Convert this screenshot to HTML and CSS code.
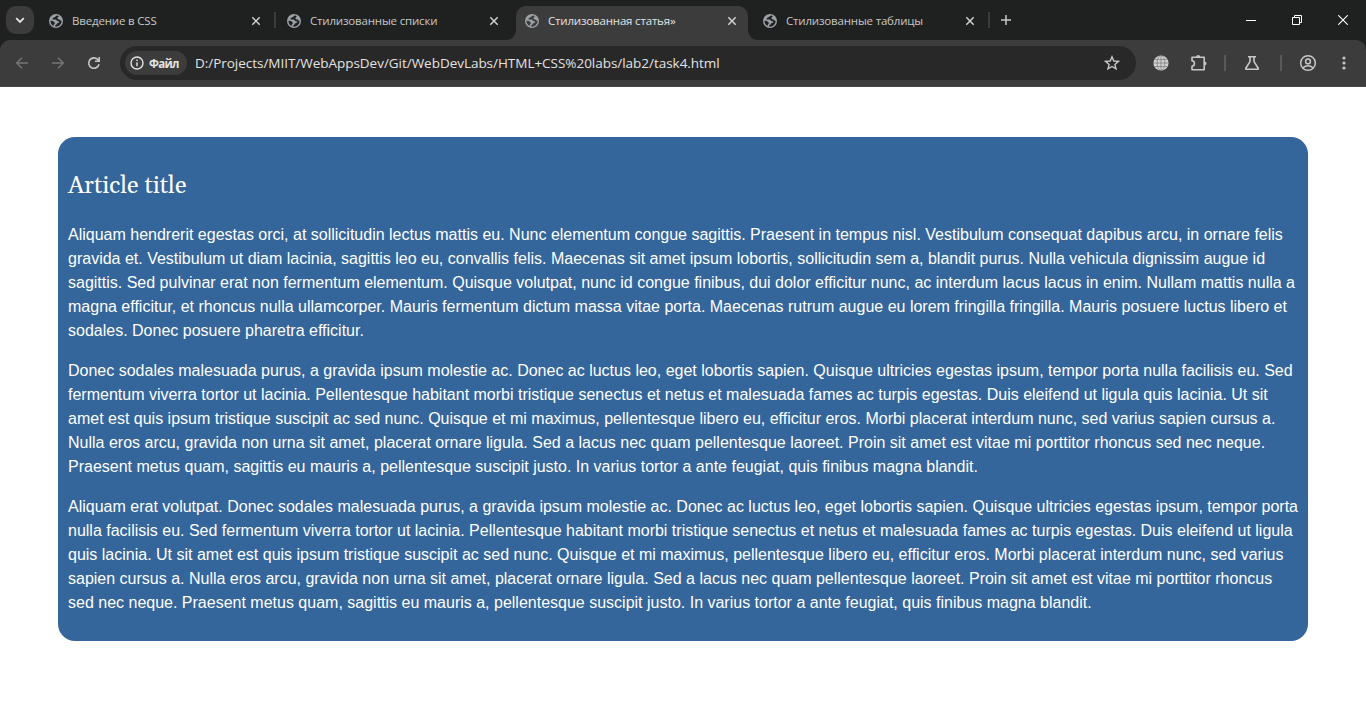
FILE: index.html
```html
<!DOCTYPE html>
<html lang="ru">
<head>
<meta charset="utf-8">
<title>Стилизованная статья»</title>
<link rel="stylesheet" href="styles.css">
</head>
<body>
<svg class="defs" width="0" height="0">
  <symbol id="globe" viewBox="0 0 14 14">
    <circle cx="7" cy="7" r="7" fill="#9aa0a6"/>
    <path d="M8.4 1.6C7 1.8 6.8 3 5.4 3.3C4.7 3.5 4.3 4.3 3.5 4.6V5.6H6.5C7.8 5.8 7.6 7 8.7 7.2H10.1V8.4C9.4 9 8.5 8.8 8 9.7C7.7 10.6 6.7 10.6 6.2 11.4V12.6C9.5 13 12.5 10.5 12.6 7C12 6.2 11 6.4 10.4 5.4C9.4 5.6 8.3 5.2 8.4 4.3C8.4 3.3 9.6 3.1 9.6 2Z M1.4 6.8C1.5 9.5 3 11.4 4.7 12.1V10.5C5.6 10.2 6.2 9.3 5.6 8.5C4.8 8.2 4.7 7.3 3.7 7.1Z" fill="var(--hole)"/>
  </symbol>
  <symbol id="cross" viewBox="0 0 10 10"><path d="M1.3 1.3 8.7 8.7M8.7 1.3 1.3 8.7" stroke="currentColor" stroke-width="1.5"/></symbol>
</svg>
<header class="browser">
  <div class="tabstrip">
    <button class="search"><svg width="10" height="7" viewBox="0 0 10 7"><path d="M1.2 1.2 5 5 8.8 1.2" fill="none" stroke="currentColor" stroke-width="1.8"/></svg></button>
    <div class="tab"><svg class="fav"><use href="#globe"/></svg><span>Введение в CSS</span><svg class="close"><use href="#cross"/></svg></div>
    <div class="tab lined"><svg class="fav"><use href="#globe"/></svg><span>Стилизованные списки</span><svg class="close"><use href="#cross"/></svg></div>
    <div class="tab active"><svg class="fav"><use href="#globe"/></svg><span>Стилизованная статья»</span><svg class="close"><use href="#cross"/></svg></div>
    <div class="tab"><svg class="fav"><use href="#globe"/></svg><span>Стилизованные таблицы</span><svg class="close"><use href="#cross"/></svg></div>
    <div class="newtab"><svg width="10" height="10" viewBox="0 0 10 10"><path d="M5 0V10M0 5H10" stroke="currentColor" stroke-width="1.5"/></svg></div>
    <div class="window">
      <svg width="10" height="10"><path d="M0 5.5H10" stroke="#fff"/></svg>
      <svg width="10" height="10"><path d="M.5 2.5H7.5V9.5H.5ZM2.5 2.5V.5H9.5V7.5H7.5" fill="none" stroke="#fff"/></svg>
      <svg width="10" height="10"><path d="M.2 .2 9.8 9.8M9.8 .2 .2 9.8" stroke="#fff" stroke-width="1.1"/></svg>
    </div>
  </div>
  <div class="toolbar">
    <div class="nav">
      <svg class="dim" width="16" height="16" viewBox="0 0 16 16"><path d="M14 8H3M8 2.7 2.7 8 8 13.3" fill="none" stroke="currentColor" stroke-width="1.5"/></svg>
      <svg class="dim" width="16" height="16" viewBox="0 0 16 16"><path d="M2 8H13M8 2.7 13.3 8 8 13.3" fill="none" stroke="currentColor" stroke-width="1.5"/></svg>
      <svg width="16" height="16" viewBox="0 0 16 16"><path d="M13 9.2A5.2 5.2 0 1 1 12.2 5.1M13.2 2V6.2H9" fill="none" stroke="currentColor" stroke-width="1.6"/></svg>
    </div>
    <div class="omnibox">
      <div class="chip"><svg width="14" height="14" viewBox="0 0 14 14"><circle cx="7" cy="7" r="6" fill="none" stroke="currentColor" stroke-width="1.4"/><path d="M7 6.2V10.3M7 3.6V5" stroke="currentColor" stroke-width="1.4"/></svg><b>Файл</b></div>
      <span class="url">D:/Projects/MIIT/WebAppsDev/Git/WebDevLabs/HTML+CSS%20labs/lab2/task4.html</span>
      <svg class="star" width="16" height="16" viewBox="0 0 16 16"><path d="M8 1.8 9.8 6 14.4 6.4 10.9 9.4 12 13.9 8 11.5 4 13.9 5.1 9.4 1.6 6.4 6.2 6Z" fill="none" stroke="currentColor" stroke-width="1.4"/></svg>
    </div>
    <div class="actions">
      <svg class="a1" width="16" height="16" viewBox="0 0 16 16"><circle cx="8" cy="8" r="7.6" fill="#d0d0d0"/><path d="M8 0V16M0 8H16M1.5 4.5H14.5M1.5 11.5H14.5" stroke="#777" stroke-width=".7"/><ellipse cx="8" cy="8" rx="3.9" ry="7.6" fill="none" stroke="#777" stroke-width=".7"/></svg>
      <svg class="a2" width="18" height="18" viewBox="0 0 18 18"><path d="M2 3.2H14.2V15.8H2V12.2C5.2 11.8 5.2 7.2 2 6.8Z" fill="none" stroke="currentColor" stroke-width="1.6" stroke-linejoin="round"/><path d="M6.2 3A2 2 0 0 1 10.2 3ZM14.5 7.5A2 2 0 0 1 14.5 11.5Z" fill="currentColor"/></svg>
      <i class="sep s1"></i>
      <svg class="a3" width="16" height="16" viewBox="0 0 16 16"><path d="M4 1.8H12M6 2V6.6L1.8 13.2Q1.5 14.2 2.5 14.2H13.5Q14.5 14.2 14.2 13.2L10 6.6V2" fill="none" stroke="currentColor" stroke-width="1.6"/></svg>
      <i class="sep s2"></i>
      <svg class="a4" width="18" height="18" viewBox="0 0 18 18"><g fill="none" stroke="currentColor" stroke-width="1.5"><circle cx="9" cy="9" r="7.3"/><circle cx="9" cy="7.4" r="2.4"/><path d="M3.8 13.8Q9 9.7 14.2 13.8"/></g></svg>
      <svg class="a5" width="4" height="14" viewBox="0 0 4 14" fill="currentColor"><circle cx="2" cy="2" r="1.6"/><circle cx="2" cy="7" r="1.6"/><circle cx="2" cy="12" r="1.6"/></svg>
    </div>
  </div>
</header>
<main>
  <article class="card">
    <h1>Article title</h1>
    <p>Aliquam hendrerit egestas orci, at sollicitudin lectus mattis eu. Nunc elementum congue sagittis. Praesent in tempus nisl. Vestibulum consequat dapibus arcu, in ornare felis<br>gravida et. Vestibulum ut diam lacinia, sagittis leo eu, convallis felis. Maecenas sit amet ipsum lobortis, sollicitudin sem a, blandit purus. Nulla vehicula dignissim augue id<br>sagittis. Sed pulvinar erat non fermentum elementum. Quisque volutpat, nunc id congue finibus, dui dolor efficitur nunc, ac interdum lacus lacus in enim. Nullam mattis nulla a<br>magna efficitur, et rhoncus nulla ullamcorper. Mauris fermentum dictum massa vitae porta. Maecenas rutrum augue eu lorem fringilla fringilla. Mauris posuere luctus libero et<br>sodales. Donec posuere pharetra efficitur.</p>
    <p>Donec sodales malesuada purus, a gravida ipsum molestie ac. Donec ac luctus leo, eget lobortis sapien. Quisque ultricies egestas ipsum, tempor porta nulla facilisis eu. Sed<br>fermentum viverra tortor ut lacinia. Pellentesque habitant morbi tristique senectus et netus et malesuada fames ac turpis egestas. Duis eleifend ut ligula quis lacinia. Ut sit<br>amet est quis ipsum tristique suscipit ac sed nunc. Quisque et mi maximus, pellentesque libero eu, efficitur eros. Morbi placerat interdum nunc, sed varius sapien cursus a.<br>Nulla eros arcu, gravida non urna sit amet, placerat ornare ligula. Sed a lacus nec quam pellentesque laoreet. Proin sit amet est vitae mi porttitor rhoncus sed nec neque.<br>Praesent metus quam, sagittis eu mauris a, pellentesque suscipit justo. In varius tortor a ante feugiat, quis finibus magna blandit.</p>
    <p>Aliquam erat volutpat. Donec sodales malesuada purus, a gravida ipsum molestie ac. Donec ac luctus leo, eget lobortis sapien. Quisque ultricies egestas ipsum, tempor porta<br>nulla facilisis eu. Sed fermentum viverra tortor ut lacinia. Pellentesque habitant morbi tristique senectus et netus et malesuada fames ac turpis egestas. Duis eleifend ut ligula<br>quis lacinia. Ut sit amet est quis ipsum tristique suscipit ac sed nunc. Quisque et mi maximus, pellentesque libero eu, efficitur eros. Morbi placerat interdum nunc, sed varius<br>sapien cursus a. Nulla eros arcu, gravida non urna sit amet, placerat ornare ligula. Sed a lacus nec quam pellentesque laoreet. Proin sit amet est vitae mi porttitor rhoncus<br>sed nec neque. Praesent metus quam, sagittis eu mauris a, pellentesque suscipit justo. In varius tortor a ante feugiat, quis finibus magna blandit.</p>
  </article>
</main>
</body>
</html>
```
FILE: styles.css
```css
* { box-sizing: border-box; }
body { margin: 0; height: 728px; overflow: hidden; background: #fff; }
svg { display: block; flex: none; }
.defs { position: absolute; }
.browser { background: #1f2120; font-family: "Open Sans", "Noto Sans", sans-serif; color: #c7c7c7; }
.tabstrip { display: flex; height: 40px; padding: 6px 0 0 6px; }
.search { width: 28px; height: 28px; padding: 0; border: 0; border-radius: 10px; background: #3c3c3c; color: #e3e3e3; display: flex; align-items: center; justify-content: center; }
.tab { --hole: #1f2120; position: relative; width: 232px; height: 34px; margin-right: 6px; padding: 0 11px 5px 9px; display: flex; align-items: center; font-size: 11.5px; letter-spacing: -.18px; white-space: nowrap; }
.search + .tab { margin-left: 6px; }
.fav { width: 14px; height: 14px; margin-right: 9px; }
.close { width: 10px; height: 10px; margin-left: auto; color: #d0d0d0; }
.tab.lined::before, .newtab::before { content: ""; position: absolute; left: -4px; top: 6px; width: 2px; height: 16px; background: #3c3c3c; }
.active { --hole: #3c3c3c; background: #3c3c3c; border-radius: 10px 10px 0 0; color: #e3e3e3; }
.active::before, .active::after { content: ""; position: absolute; bottom: 0; width: 10px; height: 10px; }
.active::before { left: -10px; background: radial-gradient(circle at 0 0, transparent 9.5px, #3c3c3c 10.5px); }
.active::after { right: -10px; background: radial-gradient(circle at 100% 0, transparent 9.5px, #3c3c3c 10.5px); }
.newtab { position: relative; width: 34px; height: 28px; margin-left: -4px; padding: 9px 0 0 13px; }
.newtab::before { left: 0; }
.window { display: flex; gap: 36px; margin-left: auto; padding: 9px 18px 0 0; }
.toolbar { height: 47px; display: flex; padding: 6px 0 0 14px; background: #3c3c3c; border-radius: 10px 10px 0 0; border-bottom: 1px solid #484848; }
.nav { display: flex; gap: 20px; width: 106px; padding-top: 9px; }
.dim { color: #757575; }
.omnibox { width: 1016px; height: 34px; padding: 0 16px 0 5px; border-radius: 17px; background: #282828; display: flex; align-items: center; }
.chip { width: 62px; height: 24px; padding-left: 5px; border-radius: 12px; background: #3c3c3c; display: flex; align-items: center; gap: 5px; font-size: 11.5px; letter-spacing: -.8px; color: #e3e3e3; }
.chip b { letter-spacing: -.7px; }
.url { margin-left: 8px; font-size: 13.5px; letter-spacing: -.03px; color: #e3e3e3; white-space: nowrap; }
.star { margin-left: auto; }
.actions { display: flex; align-items: center; height: 34px; padding-left: 17px; }
.a2 { margin-left: 21px; }
.sep { width: 2px; height: 16px; background: #5a5a5a; }
.s1 { margin-left: 16px; }
.a3 { margin-left: 18px; }
.s2 { margin-left: 20px; }
.a4 { margin-left: 17px; }
.a5 { margin-left: 25px; }
main { padding: 50px 58px; }
.card { height: 504px; padding: 34px 10px 0; border-radius: 17px; background: #34659b; color: #fff; font: 16px/24px "Liberation Sans", Arial, sans-serif; white-space: nowrap; }
.card h1 { margin: 0 0 21px; font: 24px/31px Gelasio, Georgia, "DejaVu Serif", "Liberation Serif", serif; }
.card p { margin: 0 0 16px; }
```
